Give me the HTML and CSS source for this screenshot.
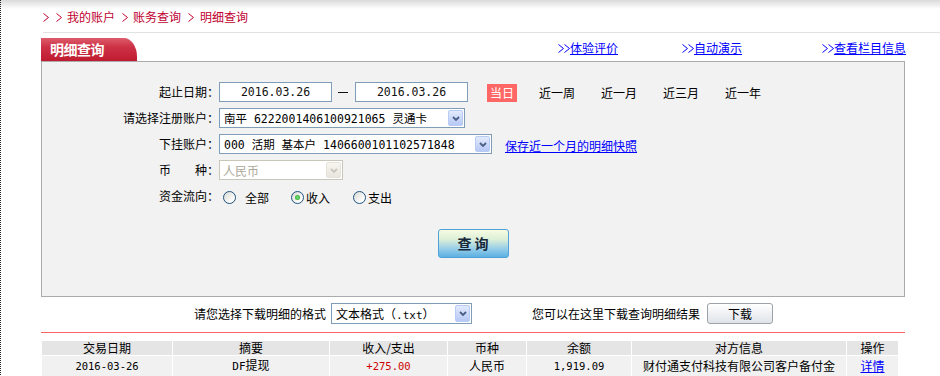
FILE: index.html
```html
<!DOCTYPE html>
<html lang="zh-CN">
<head>
<meta charset="utf-8">
<title>明细查询</title>
<link rel="stylesheet" href="styles.css">
</head>
<body>
<div class="page">
  <div class="crumb">
    <span class="arr a1"><svg width="6" height="9" viewBox="0 0 6 9"><polyline points="0.5,0.5 5.5,4.5 0.5,8.5" fill="none" stroke="#c0002f" stroke-width="1"/></svg></span>
    <span class="arr a2"><svg width="6" height="9" viewBox="0 0 6 9"><polyline points="0.5,0.5 5.5,4.5 0.5,8.5" fill="none" stroke="#c0002f" stroke-width="1"/></svg></span>
    <span class="ctext">我的账户</span>
    <span class="arr a2"><svg width="6" height="9" viewBox="0 0 6 9"><polyline points="0.5,0.5 5.5,4.5 0.5,8.5" fill="none" stroke="#c0002f" stroke-width="1"/></svg></span>
    <span class="ctext">账务查询</span>
    <span class="arr a3"><svg width="6" height="9" viewBox="0 0 6 9"><polyline points="0.5,0.5 5.5,4.5 0.5,8.5" fill="none" stroke="#c0002f" stroke-width="1"/></svg></span>
    <span class="ctext">明细查询</span>
  </div>

  <div class="titlebar">
    <div class="tab">明细查询</div>
    <div class="tlink l1"><span class="gt"><svg width="12" height="9" viewBox="0 0 12 9"><polyline points="0.5,0.5 5.5,4.5 0.5,8.5" fill="none" stroke="#0000ff" stroke-width="1"/><polyline points="6.5,0.5 11.5,4.5 6.5,8.5" fill="none" stroke="#0000ff" stroke-width="1"/></svg></span><a href="#">体验评价</a></div>
    <div class="tlink l2"><span class="gt"><svg width="12" height="9" viewBox="0 0 12 9"><polyline points="0.5,0.5 5.5,4.5 0.5,8.5" fill="none" stroke="#0000ff" stroke-width="1"/><polyline points="6.5,0.5 11.5,4.5 6.5,8.5" fill="none" stroke="#0000ff" stroke-width="1"/></svg></span><a href="#">自动演示</a></div>
    <div class="tlink l3"><span class="gt"><svg width="12" height="9" viewBox="0 0 12 9"><polyline points="0.5,0.5 5.5,4.5 0.5,8.5" fill="none" stroke="#0000ff" stroke-width="1"/><polyline points="6.5,0.5 11.5,4.5 6.5,8.5" fill="none" stroke="#0000ff" stroke-width="1"/></svg></span><a href="#">查看栏目信息</a></div>
  </div>

  <div class="panel">
    <div class="form">
      <div class="lbl">起止日期：</div>
      <div class="ctl">
        <div class="date">2016.03.26</div>
        <span class="dash"></span>
        <div class="date">2016.03.26</div>
        <span class="today">当日</span>
        <span class="range first">近一周</span>
        <span class="range">近一月</span>
        <span class="range">近三月</span>
        <span class="range">近一年</span>
      </div>

      <div class="lbl">请选择注册账户：</div>
      <div class="ctl">
        <div class="sel w1">
          <div class="val">南平 6222001406100921065 灵通卡</div>
          <div class="dd"><svg width="8" height="5" viewBox="0 0 8 5"><polyline points="1,1 4,4 7,1" fill="none" stroke="#4a5e86" stroke-width="1.8"/></svg></div>
        </div>
      </div>

      <div class="lbl">下挂账户：</div>
      <div class="ctl">
        <div class="sel w2">
          <div class="val">000 活期 基本户 1406600101102571848</div>
          <div class="dd"><svg width="8" height="5" viewBox="0 0 8 5"><polyline points="1,1 4,4 7,1" fill="none" stroke="#4a5e86" stroke-width="1.8"/></svg></div>
        </div>
        <a class="snap" href="#">保存近一个月的明细快照</a>
      </div>

      <div class="lbl">币<span class="sp"></span>种：</div>
      <div class="ctl">
        <div class="sel w3 off">
          <div class="val">人民币</div>
          <div class="dd"><svg width="8" height="5" viewBox="0 0 8 5"><polyline points="1,1 4,4 7,1" fill="none" stroke="#c9c7bc" stroke-width="1.8"/></svg></div>
        </div>
      </div>

      <div class="lbl">资金流向：</div>
      <div class="ctl radios">
        <span class="radio r1"></span><span class="rtext t1">全部</span>
        <span class="radio r2 on"></span><span class="rtext t2">收入</span>
        <span class="radio r3"></span><span class="rtext t2">支出</span>
      </div>
    </div>
    <div class="btnrow"><div class="qbtn">查 询</div></div>
  </div>

  <div class="dlrow">
    <span>请您选择下载明细的格式</span>
    <div class="sel w4">
      <div class="val cjk">文本格式（<span class="mono">.txt</span>）</div>
      <div class="dd"><svg width="8" height="5" viewBox="0 0 8 5"><polyline points="1,1 4,4 7,1" fill="none" stroke="#4a5e86" stroke-width="1.8"/></svg></div>
    </div>
    <span class="dltext">您可以在这里下载查询明细结果</span>
    <div class="dlbtn">下载</div>
  </div>

  <div class="redline"></div>

  <table class="list">
    <colgroup>
      <col class="c1"><col class="c2"><col class="c3"><col class="c4"><col class="c5"><col class="c6"><col class="c7">
    </colgroup>
    <thead>
      <tr><th>交易日期</th><th>摘要</th><th>收入/支出</th><th>币种</th><th>余额</th><th>对方信息</th><th>操作</th></tr>
    </thead>
    <tbody>
      <tr>
        <td class="num">2016-03-26</td>
        <td><span class="mono">DF</span>提现</td>
        <td class="num inc">+275.00</td>
        <td>人民币</td>
        <td class="num">1,919.09</td>
        <td>财付通支付科技有限公司客户备付金</td>
        <td><a href="#">详情</a></td>
      </tr>
    </tbody>
  </table>
</div>
</body>
</html>
```

FILE: styles.css
```css
html, body {
  margin: 0;
  padding: 0;
}
body {
  background: #fff linear-gradient(#dadada, #ffffff 9px) no-repeat;
  font-family: "Noto Sans CJK SC", "Liberation Sans", sans-serif;
  font-size: 12px;
  color: #000;
}
a { color: #0000ff; text-decoration: underline; }

.page {
  border-left: 1px dotted #222;
  min-height: 376px;
  box-sizing: border-box;
  padding-left: 40px;
}

/* breadcrumb */
.crumb {
  margin-left: 2px;
  height: 30px;
  padding-top: 2px;
  border-bottom: 1px solid #e2e2e2;
  display: flex;
  align-items: center;
  color: #c0002f;
  line-height: 14px;
}
.arr { display: inline-flex; align-items: center; height: 14px; }
.arr svg { display: block; }
.a1 { width: 13px; }
.a2 { width: 11px; }
.a3 { width: 12px; }
.ctext { margin-right: 7px; }

/* title bar */
.titlebar {
  display: flex;
  height: 23px;
  margin-top: 5px;
}
.tab {
  width: 96px;
  height: 23px;
  box-sizing: border-box;
  padding-left: 9px;
  background: linear-gradient(#dd5c6b 0%, #cd3145 40%, #bf1b30 100%);
  border-top-right-radius: 13px 19px;
  color: #fff;
  font-weight: bold;
  font-size: 14px;
  line-height: 22px;
  letter-spacing: -0.5px;
}
.tlink {
  display: flex;
  align-items: center;
  height: 20px;
  line-height: 20px;
  white-space: nowrap;
  color: #0000ff;
}
.gt {
  display: inline-flex;
  align-items: center;
  width: 12px;
  margin-top: 1px;
}
.gt svg { display: block; }
.l1 { margin-left: 421px; }
.l2 { margin-left: 64px; }
.l3 { margin-left: 80px; }

/* panel */
.panel {
  width: 864px;
  height: 236px;
  box-sizing: border-box;
  border: 1px solid #ababab;
  background: #f2f2f2;
  padding-top: 20px;
}
.form {
  display: grid;
  grid-template-columns: 177px auto;
  grid-auto-rows: 20px;
  row-gap: 6px;
  align-items: center;
}
.lbl {
  text-align: right;
  white-space: nowrap;
  line-height: 20px;
}
.sp { display: inline-block; width: 24px; }
.ctl {
  display: flex;
  align-items: center;
  height: 20px;
  white-space: nowrap;
}

.date {
  width: 113px;
  height: 20px;
  box-sizing: border-box;
  border: 1px solid #7f9db9;
  background: #fff;
  font-family: "DejaVu Sans Mono", monospace;
  font-size: 11.5px;
  line-height: 18px;
  text-align: center;
  color: #111;
}
.dash {
  width: 10px;
  height: 0;
  border-top: 1px solid #111;
  margin: 0 7px 0 6px;
}
.today {
  margin-left: 19px;
  width: 30px;
  height: 18px;
  margin-top: 2px;
  background: #ff6666;
  color: #fff;
  line-height: 18px;
  text-align: center;
  font-size: 12px;
}
.range { width: 36px; margin-left: 26px; }
.range.first { margin-left: 22px; }

/* select */
.sel {
  display: flex;
  height: 20px;
  box-sizing: border-box;
  border: 1px solid #7f9db9;
  background: #fff;
  padding: 1px;
}
.sel .val {
  flex: 1;
  padding-left: 3px;
  line-height: 18px;
  white-space: nowrap;
  overflow: hidden;
  font-family: "DejaVu Sans Mono", "Noto Sans CJK SC", monospace;
  font-size: 11.5px;
}
.sel .val.cjk {
  font-family: "Noto Sans CJK SC", sans-serif;
  font-size: 12px;
}
.sel .dd {
  width: 15px;
  box-sizing: border-box;
  border: 1px solid #b8cbf4;
  border-radius: 2px;
  background: linear-gradient(#e2eafc, #b6c8f5);
  display: flex;
  align-items: center;
  justify-content: center;
}
.sel .dd svg { display: block; }
.w1 { width: 246px; }
.w2 { width: 273px; }
.w3 { width: 124px; }
.w4 { width: 141px; margin-left: 5px; }
.sel.off { border-color: #c9c7ba; }
.sel.off .val {
  color: #aca899;
  font-family: "Noto Sans CJK SC", sans-serif;
  font-size: 12px;
  padding-left: 2px;
}
.sel.off .dd {
  border-color: #e6e4da;
  background: linear-gradient(#f6f5f0, #e8e6dc);
}
.snap { margin-left: 13px; line-height: 20px; padding-top: 3px; }

/* radios */
.radio {
  width: 13px;
  height: 13px;
  box-sizing: border-box;
  border-radius: 50%;
  border: 1px solid #1d5281;
  background: linear-gradient(135deg, #d8d8d0 0%, #ffffff 80%);
  display: inline-flex;
  align-items: center;
  justify-content: center;
  margin-top: 2px;
}
.radio.on::after {
  content: "";
  width: 5px;
  height: 5px;
  border-radius: 50%;
  background: radial-gradient(circle, #7de07d, #1f9f1f);
}
.r1 { margin-left: 4px; }
.r2 { margin-left: 22px; }
.r3 { margin-left: 23px; }
.rtext { line-height: 20px; margin-top: 3px; }
.t1 { margin-left: 9px; }
.t2 { margin-left: 2px; }

/* query button */
.btnrow {
  display: flex;
  justify-content: center;
  margin-top: 23px;
}
.qbtn {
  width: 71px;
  height: 29px;
  box-sizing: border-box;
  border: 1px solid #4ea2d7;
  border-radius: 3px;
  background: linear-gradient(#f7fbe2 0%, #dcefd8 35%, #92cbe9 72%, #5bb0e1 100%);
  color: #18283a;
  font-weight: bold;
  font-size: 14px;
  line-height: 27px;
  text-align: center;
}

/* download row */
.dlrow {
  display: flex;
  align-items: center;
  height: 21px;
  margin-top: 6px;
  padding-left: 153px;
  white-space: nowrap;
}
.dlrow .sel { height: 21px; }
.dltext { margin-left: 60px; }
.dlbtn {
  margin-left: 7px;
  width: 66px;
  height: 21px;
  box-sizing: border-box;
  border: 1px solid #9ea3aa;
  border-radius: 3px;
  background: linear-gradient(#ffffff, #dfe3e9);
  text-align: center;
  line-height: 19px;
}

.redline {
  width: 864px;
  height: 1px;
  margin-top: 8px;
  background: #ff6262;
}

/* list table */
.list {
  border-collapse: separate;
  border-spacing: 1px;
  width: 858px;
  margin-top: 7px;
  table-layout: fixed;
}
.c1 { width: 130px; }
.c2 { width: 156px; }
.c3 { width: 117px; }
.c4 { width: 78px; }
.c5 { width: 104px; }
.c6 { width: 214px; }
.c7 { width: 51px; }
.list th {
  background: #e5e5e5;
  height: 14px;
  padding: 0;
  font-weight: normal;
  line-height: 14px;
  text-align: center;
}
.list td {
  background: #f1f1f1;
  height: 18px;
  padding: 0;
  line-height: 18px;
  text-align: center;
  white-space: nowrap;
}
.mono {
  font-family: "DejaVu Sans Mono", monospace;
  font-size: 11px;
}
.list .num {
  font-family: "DejaVu Sans Mono", monospace;
  font-size: 10.5px;
}
.list .inc { color: #cc0000; }
```
